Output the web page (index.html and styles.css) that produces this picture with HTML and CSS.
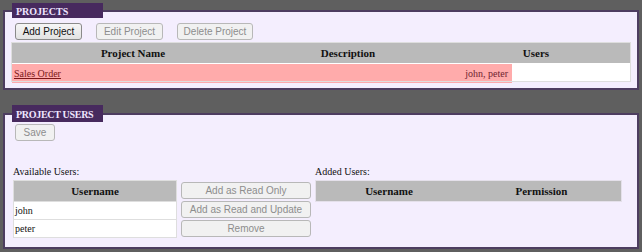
FILE: index.html
```html
<!DOCTYPE html>
<html lang="en">
<head>
  <meta charset="UTF-8" />
  <title>Projects</title>
  <link rel="stylesheet" href="styles.css">
</head>
<body>
  <fieldset class="panel panel-projects">
    <legend>PROJECTS</legend>
    <div class="toolbar">
      <button class="btn">Add Project</button>
      <button class="btn" disabled>Edit Project</button>
      <button class="btn btn-wide" disabled>Delete Project</button>
    </div>
    <table class="grid projects-grid">
      <thead>
        <tr>
          <th class="col-name">Project Name</th>
          <th class="col-desc">Description</th>
          <th>Users</th>
        </tr>
      </thead>
      <tbody>
        <tr>
          <td colspan="3" class="row-cell">
            <div class="selected-row">
              <a href="#">Sales Order</a>
              <span class="users">john, peter</span>
            </div>
          </td>
        </tr>
      </tbody>
    </table>
  </fieldset>

  <fieldset class="panel panel-users">
    <legend>PROJECT USERS</legend>
    <div class="toolbar">
      <button class="btn btn-save" disabled>Save</button>
    </div>
    <div class="user-lists">
      <div class="list available">
        <div class="list-label">Available Users:</div>
        <table class="grid">
          <thead>
            <tr><th>Username</th></tr>
          </thead>
          <tbody>
            <tr><td>john</td></tr>
            <tr><td>peter</td></tr>
          </tbody>
        </table>
      </div>
      <div class="actions">
        <button class="btn" disabled>Add as Read Only</button>
        <button class="btn" disabled>Add as Read and Update</button>
        <button class="btn" disabled>Remove</button>
      </div>
      <div class="list added">
        <div class="list-label">Added Users:</div>
        <table class="grid">
          <thead>
            <tr><th>Username</th><th>Permission</th></tr>
          </thead>
        </table>
      </div>
    </div>
  </fieldset>
</body>
</html>
```

FILE: styles.css
```css
html, body {
  margin: 0;
  padding: 0;
  height: 100%;
  background: #5f5f5f;
  font-family: "Liberation Serif", "Times New Roman", serif;
  font-size: 10px;
  color: #111;
}

body {
  padding-top: 3px;
  box-sizing: border-box;
}

.panel {
  margin: 0 3px;
  border: 2px solid #4d3d60;
  background: #f4eefe;
  padding: 0 8px 6px 6px;
  min-width: 0;
}

.panel-users {
  margin-top: 15px;
  padding-bottom: 9px;
}

.panel legend {
  box-sizing: border-box;
  width: 91px;
  height: 15px;
  margin-left: 1px;
  padding: 2px 4px 0 4px;
  background: #472a5e;
  color: #efe6ff;
  font-weight: bold;
  font-size: 10px;
  line-height: 13px;
  white-space: nowrap;
  overflow: hidden;
}

.panel-users legend {
  height: 17px;
  padding: 3px 0 0 4px;
  letter-spacing: -0.3px;
}

.toolbar {
  display: flex;
  gap: 14px;
  margin: 5px 0 0 4px;
}

.panel-users .toolbar {
  margin-top: 2px;
}

.btn {
  box-sizing: border-box;
  height: 17px;
  width: 67px;
  padding: 0;
  border: 1px solid #8a8a8a;
  border-radius: 3px;
  background: linear-gradient(#f6f6f6, #e2e2e2);
  font-family: "Liberation Sans", Arial, sans-serif;
  font-size: 10px;
  color: #111;
}

.btn:disabled {
  border-color: #b8b8b8;
  background: #f1f1f1;
  color: #8d8d8d;
}

.btn-wide {
  width: 76px;
}

.btn-save {
  width: 40px;
}

.grid {
  border-collapse: collapse;
  border: 1px solid #dedede;
  background: #fff;
}

.grid th {
  height: 20px;
  padding: 0;
  background: #bababa;
  font-size: 11px;
  font-weight: bold;
  text-align: center;
}

.grid td {
  height: 17px;
  padding: 0 1px;
  border-top: 1px solid #dedede;
  font-size: 10px;
}

.projects-grid {
  width: 620px;
  margin-top: 2px;
}

.projects-grid .col-name {
  width: 242px;
}

.projects-grid .col-desc {
  width: 188px;
}

.projects-grid .row-cell {
  height: 18px;
  padding: 0;
  border-top: 0;
}

.selected-row {
  display: flex;
  justify-content: space-between;
  align-items: center;
  box-sizing: border-box;
  width: 500px;
  height: 19px;
  margin-top: 1px;
  margin-bottom: -2px;
  padding: 0 4px 0 2px;
  background: rgba(255, 150, 150, 0.8);
}

.selected-row a {
  color: #7c1818;
}

.selected-row .users {
  color: #6e2330;
}

.user-lists {
  display: flex;
  margin-top: 25px;
  padding-left: 2px;
}

.list-label {
  height: 14px;
  line-height: 12px;
}

.available {
  width: 164px;
}

.available .grid {
  width: 164px;
}

.actions {
  display: flex;
  flex-direction: column;
  gap: 2px;
  width: 130px;
  margin: 16px 4px 0 4px;
}

.actions .btn {
  width: 130px;
}

.added {
  width: 307px;
}

.added .grid {
  width: 307px;
  background: transparent;
  border-color: #e4e0ea;
}
```
